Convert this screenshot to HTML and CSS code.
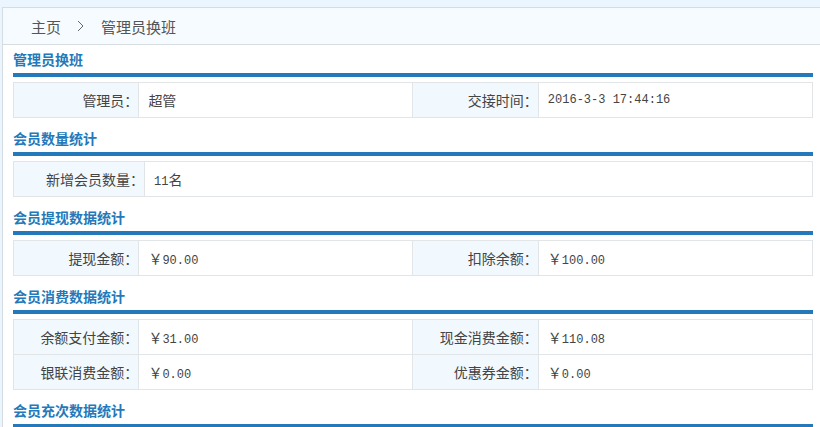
FILE: index.html
```html
<html>
<head>
  <meta charset="utf-8">
  <link rel="stylesheet" href="styles.css">
</head>
<body>
  <div class="panel">
    <div class="crumbs">
      <span>主页</span>
      <svg class="sep" width="7" height="12" viewBox="0 0 7 12"><path d="M1 1 L6 6 L1 11" fill="none" stroke="#666" stroke-width="1"/></svg>
      <span>管理员换班</span>
    </div>
    <div class="content">
      <div class="title">管理员换班</div>
      <table class="info">
        <tr>
          <td class="lbl">管理员：</td>
          <td class="val">超管</td>
          <td class="lbl">交接时间：</td>
          <td class="val"><span class="num">2016-3-3 17:44:16</span></td>
        </tr>
      </table>

      <div class="title">会员数量统计</div>
      <table class="info single">
        <tr>
          <td class="lbl">新增会员数量：</td>
          <td class="val"><span class="num">11</span>名</td>
        </tr>
      </table>

      <div class="title">会员提现数据统计</div>
      <table class="info">
        <tr>
          <td class="lbl">提现金额：</td>
          <td class="val">￥<span class="num">90.00</span></td>
          <td class="lbl">扣除余额：</td>
          <td class="val">￥<span class="num">100.00</span></td>
        </tr>
      </table>

      <div class="title">会员消费数据统计</div>
      <table class="info">
        <tr>
          <td class="lbl">余额支付金额：</td>
          <td class="val">￥<span class="num">31.00</span></td>
          <td class="lbl">现金消费金额：</td>
          <td class="val">￥<span class="num">110.08</span></td>
        </tr>
        <tr>
          <td class="lbl">银联消费金额：</td>
          <td class="val">￥<span class="num">0.00</span></td>
          <td class="lbl">优惠券金额：</td>
          <td class="val">￥<span class="num">0.00</span></td>
        </tr>
      </table>

      <div class="title">会员充次数据统计</div>
    </div>
  </div>
</body>
</html>
```

FILE: styles.css
```css
body {
  margin: 0;
  padding-top: 7px;
  background-color: #eaf5fd;
  font-family: "Noto Sans CJK SC", sans-serif;
  color: #444;
}
.panel {
  margin-left: 2px;
  border: 1px solid #d5dce2;
  border-right: none;
  background-color: white;
}
.crumbs {
  height: 36px;
  display: flex;
  align-items: center;
  padding-left: 28px;
  background-color: #f6fbff;
  border-bottom: 1px solid #d5dce2;
  font-size: 15px;
  color: #555;
}
.sep {
  margin: 0 17px 0 16px;
}
.content {
  padding: 4px 7px 0 10px;
}
.title {
  font-size: 14px;
  font-weight: bold;
  line-height: 20px;
  color: #2379b9;
  padding-bottom: 4px;
  border-bottom: 4px solid #2379b9;
  margin-bottom: 5px;
}
.info {
  width: 100%;
  border-collapse: collapse;
  table-layout: fixed;
  margin-bottom: 10px;
}
.info td {
  height: 35px;
  padding: 0;
  border: 1px solid #e2e5e8;
  font-size: 14px;
}
.lbl {
  width: 16%;
  text-align: right;
  background-color: #f1f8fe;
  padding-right: 1px;
  white-space: nowrap;
}
.val {
  width: 34%;
  padding-left: 9px !important;
  color: #444;
}
.single .lbl {
  width: 130px;
}
.single .val {
  width: auto;
}
.num {
  font-family: "Liberation Mono", monospace;
  font-size: 12px;
}
```
